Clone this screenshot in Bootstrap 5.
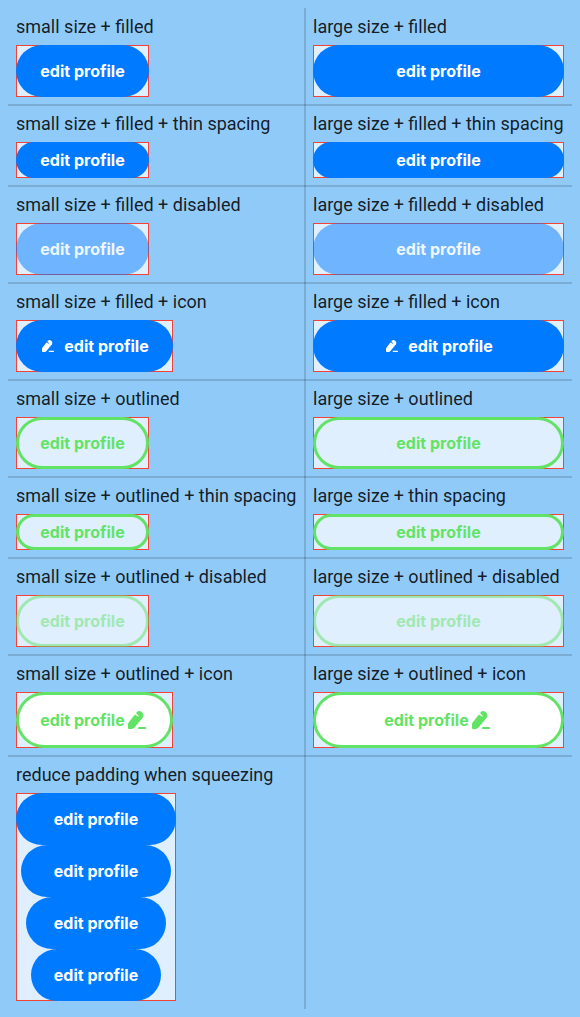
<!DOCTYPE html>
<html lang="en">
<head>
<meta charset="utf-8">
<meta name="viewport" content="width=device-width, initial-scale=1">
<title>Button gallery</title>
<link href="https://cdn.jsdelivr.net/npm/bootstrap@5.3.0/dist/css/bootstrap.min.css" rel="stylesheet">
<style>
  :root { --line: rgba(0,0,0,.15); --primary: #007aff; --accent: #63e366; }
  body { background: #90caf9; color: rgba(0,0,0,.87); font-family: Roboto, sans-serif; font-size: 18px; line-height: 21px; }
  .sample-row { border-bottom: 2px solid var(--line); }
  .sample-row:last-child { border-bottom: 0; }
  .sample { padding: 7px 8px 7px; white-space: nowrap; }
  .sample-row:first-child .sample { padding-top: 8px; }
  .sample-row:last-child .sample { padding-bottom: 8px; }
  /* the column rule runs over the row rule, so the crossing is darker */
  .sample-start { width: 298px; border-right: 2px solid var(--line); margin-bottom: -2px; }
  .sample-row:last-child .sample-start { margin-bottom: 0; }
  .sample-end { width: 266px; padding-left: 7px; padding-right: 8px; }
  .caption-text { margin-bottom: 8px; }
  .frame { background: #dfeffe; box-shadow: inset 0 0 0 1px #f44336; width: 133px; }
  .frame-icon { width: 157px; }
  .frame-stack { width: 160px; }
  .sample-end .frame { width: 251px; }
  .btn-pill { --bs-btn-font-family: Inter, sans-serif; --bs-btn-font-size: 16px; --bs-btn-font-weight: 700; --bs-btn-padding-x: 0; --bs-btn-padding-y: 0; --bs-btn-border-width: 0; --bs-btn-border-radius: 28px; --bs-btn-disabled-opacity: .5;
    --bs-btn-color: #fff; --bs-btn-bg: var(--primary); --bs-btn-disabled-color: #fff; --bs-btn-disabled-bg: var(--primary); height: 52px; line-height: 20px; }
  .btn-line { --bs-btn-color: var(--accent); --bs-btn-bg: transparent; --bs-btn-border-width: 3px; --bs-btn-border-color: var(--accent); --bs-btn-disabled-color: var(--accent); --bs-btn-disabled-bg: transparent; --bs-btn-disabled-border-color: var(--accent); }
  .btn-thin { height: 36px; }
  .btn-tall { height: 56px; --bs-btn-bg: #fff; }
</style>
</head>
<body class="p-2">
<svg class="d-none">
  <symbol id="pen" viewBox="0 0 18 18">
    <path d="M0 17V13.200Q0 12.300 .6 11.500L6.300 4.200Q7 3.400 7.900 4.100L10 5.700 10.800 4.700 8.700 3Q7.800 2.200 8.600 1.300 11-.9 13.700 1T15 6.200L13.200 8.600 6.300 16.700Q5.400 17.800 4 17.900L1 18Q0 18 0 17Z"/>
    <rect x="10" y="16" width="8" height="2" rx=".6"/>
  </symbol>
</svg>
<main>
  <div class="sample-row d-flex">
    <div class="sample sample-start"><div class="caption-text">small size + filled</div><div class="frame d-flex"><button class="btn btn-pill w-100">edit profile</button></div></div>
    <div class="sample sample-end"><div class="caption-text">large size + filled</div><div class="frame d-flex"><button class="btn btn-pill w-100">edit profile</button></div></div>
  </div>
  <div class="sample-row d-flex">
    <div class="sample sample-start"><div class="caption-text">small size + filled + thin spacing</div><div class="frame d-flex"><button class="btn btn-pill btn-thin w-100">edit profile</button></div></div>
    <div class="sample sample-end"><div class="caption-text">large size + filled + thin spacing</div><div class="frame d-flex"><button class="btn btn-pill btn-thin w-100">edit profile</button></div></div>
  </div>
  <div class="sample-row d-flex">
    <div class="sample sample-start"><div class="caption-text">small size + filled + disabled</div><div class="frame d-flex"><button class="btn btn-pill w-100" disabled>edit profile</button></div></div>
    <div class="sample sample-end"><div class="caption-text">large size + filledd + disabled</div><div class="frame d-flex"><button class="btn btn-pill w-100" disabled>edit profile</button></div></div>
  </div>
  <div class="sample-row d-flex">
    <div class="sample sample-start"><div class="caption-text">small size + filled + icon</div><div class="frame frame-icon d-flex"><button class="btn btn-pill w-100 d-flex align-items-center justify-content-center"><svg class="me-2" width="16" height="16" viewBox="-3 -3 24 24" fill="currentColor"><use href="#pen" width="18" height="18"/></svg>edit profile</button></div></div>
    <div class="sample sample-end"><div class="caption-text">large size + filled + icon</div><div class="frame d-flex"><button class="btn btn-pill w-100 d-flex align-items-center justify-content-center"><svg class="me-2" width="16" height="16" viewBox="-3 -3 24 24" fill="currentColor"><use href="#pen" width="18" height="18"/></svg>edit profile</button></div></div>
  </div>
  <div class="sample-row d-flex">
    <div class="sample sample-start"><div class="caption-text">small size + outlined</div><div class="frame d-flex"><button class="btn btn-pill btn-line w-100">edit profile</button></div></div>
    <div class="sample sample-end"><div class="caption-text">large size + outlined</div><div class="frame d-flex"><button class="btn btn-pill btn-line w-100">edit profile</button></div></div>
  </div>
  <div class="sample-row d-flex">
    <div class="sample sample-start"><div class="caption-text">small size + outlined + thin spacing</div><div class="frame d-flex"><button class="btn btn-pill btn-line btn-thin w-100">edit profile</button></div></div>
    <div class="sample sample-end"><div class="caption-text">large size + thin spacing</div><div class="frame d-flex"><button class="btn btn-pill btn-line btn-thin w-100">edit profile</button></div></div>
  </div>
  <div class="sample-row d-flex">
    <div class="sample sample-start"><div class="caption-text">small size + outlined + disabled</div><div class="frame d-flex"><button class="btn btn-pill btn-line w-100" disabled>edit profile</button></div></div>
    <div class="sample sample-end"><div class="caption-text">large size + outlined + disabled</div><div class="frame d-flex"><button class="btn btn-pill btn-line w-100" disabled>edit profile</button></div></div>
  </div>
  <div class="sample-row d-flex">
    <div class="sample sample-start"><div class="caption-text">small size + outlined + icon</div><div class="frame frame-icon d-flex"><button class="btn btn-pill btn-line btn-tall w-100 d-flex align-items-center justify-content-center">edit profile<svg width="24" height="24" viewBox="-3 -3 24 24" fill="currentColor"><use href="#pen" width="18" height="18"/></svg></button></div></div>
    <div class="sample sample-end"><div class="caption-text">large size + outlined + icon</div><div class="frame d-flex"><button class="btn btn-pill btn-line btn-tall w-100 d-flex align-items-center justify-content-center">edit profile<svg width="24" height="24" viewBox="-3 -3 24 24" fill="currentColor"><use href="#pen" width="18" height="18"/></svg></button></div></div>
  </div>
  <div class="sample-row d-flex">
    <div class="sample sample-start"><div class="caption-text">reduce padding when squeezing</div>
      <div class="frame frame-stack d-flex flex-column align-items-center">
        <button class="btn btn-pill" style="width:160px">edit profile</button>
        <button class="btn btn-pill" style="width:150px">edit profile</button>
        <button class="btn btn-pill" style="width:140px">edit profile</button>
        <button class="btn btn-pill" style="width:130px">edit profile</button>
      </div>
    </div>
  </div>
</main>
<script src="https://cdn.jsdelivr.net/npm/bootstrap@5.3.0/dist/js/bootstrap.bundle.min.js"></script>
</body>
</html>
